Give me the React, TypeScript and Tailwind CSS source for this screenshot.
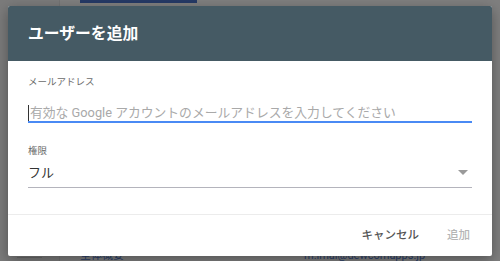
import React from "react";

export default function App() {
  const font = { fontFamily: '"Roboto", "Noto Sans CJK JP", sans-serif' };
  return (
    <div className="relative w-[500px] h-[261px] overflow-hidden bg-[#7f7f7f]" style={font}>
      {/* underlying page (dimmed) */}
      <div className="flex h-full">
        <div className="w-[60px] h-full bg-[#7b7b7b] border-r border-[#747474] flex flex-col justify-end">
          <div className="mx-[17px] mb-[1px] h-[3px] border-t border-[#6a6a6a]" />
        </div>
        <div className="flex-1 flex flex-col justify-between">
          <div className="ml-[20px] w-[117px] h-[3px] bg-[#253a66]" />
          <div className="flex items-end h-[5px] text-[11px] leading-[10px] text-[#2b3f6b]">
            <span className="ml-[20px]">全体概要</span>
            <span className="ml-[180px]">m.imai@dewcomapps.jp</span>
          </div>
        </div>
      </div>

      {/* dialog */}
      <div className="absolute left-[8px] top-[6px] w-[484px] h-[250px] bg-white rounded-[2px] shadow-[0_4px_14px_rgba(0,0,0,0.35)] overflow-hidden flex flex-col">
        <div className="h-[55px] bg-[#455a64] flex items-center px-[20px] shrink-0">
          <span className="text-white text-[15.8px] font-bold">ユーザーを追加</span>
        </div>
        <div className="px-[20px] pt-[15px] flex flex-col">
          <div className="text-[9.5px] leading-[12px] text-[#6b6b6b]">メールアドレス</div>
          <div className="mt-[17px] flex items-center h-[16px]">
            <span className="w-[1px] h-[16px] bg-[#333] mr-[1px]" />
            <span className="text-[12.8px] leading-[16px] text-[#a9a9a9] whitespace-nowrap">
              有効な Google アカウントのメールアドレスを入力してください
            </span>
          </div>
          <div className="h-[1.5px] bg-[#4a8af4]" />
          <div className="mt-[22px] text-[9.5px] leading-[12px] text-[#6b6b6b]">権限</div>
          <div className="mt-[7px] pb-[5px] flex items-center justify-between">
            <span className="text-[13px] leading-[18px] text-[#333]">フル</span>
            <svg width="10" height="6" viewBox="0 0 10 6" className="mr-[4px]">
              <path d="M0 0 L10 0 L5 5 Z" fill="#9a9a9a" />
            </svg>
          </div>
          <div className="h-[1px] bg-[#b4b4bc]" />
        </div>
        <div className="mt-[26px] border-t border-[#ececec] flex-1 flex items-center justify-end gap-[28px] pr-[22px]">
          <span className="text-[11.5px] text-[#555] font-medium">キャンセル</span>
          <span className="text-[11.5px] text-[#b5b5b5] font-medium">追加</span>
        </div>
      </div>
    </div>
  );
}
